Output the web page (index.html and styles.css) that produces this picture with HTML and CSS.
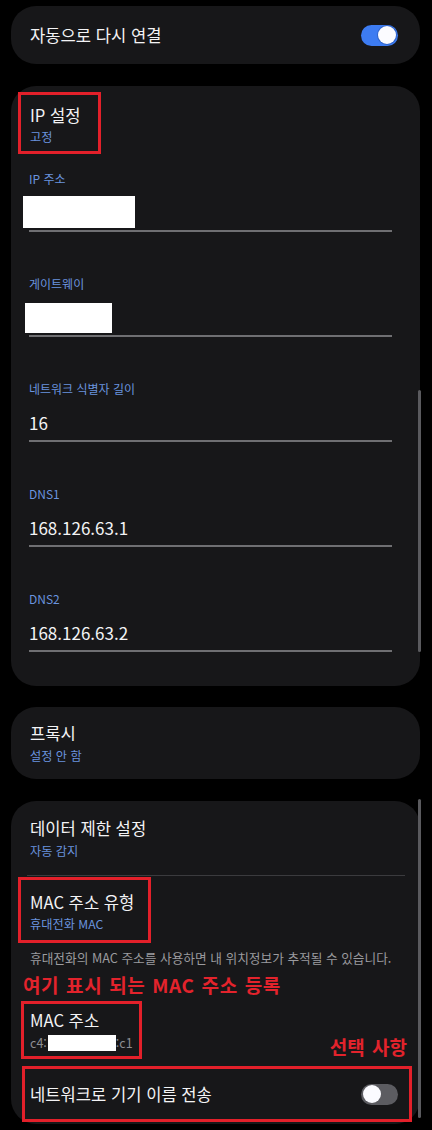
FILE: index.html
```html
<!DOCTYPE html>
<html lang="ko">
<head>
<meta charset="utf-8">
<title>Wi-Fi 설정</title>
<link rel="stylesheet" href="styles.css">
</head>
<body>
<div class="screen">
  <section class="card card-row">
    <span class="title">자동으로 다시 연결</span>
    <span class="toggle on"><span class="knob"></span></span>
  </section>

  <section class="card card-ip">
    <div class="mark mark-ip">
      <div class="title">IP 설정</div>
      <div class="sub">고정</div>
    </div>
    <div class="fields">
      <div class="field">
        <div class="label">IP 주소</div>
        <div class="value"><span class="redact redact-ip"></span></div>
        <div class="underline"></div>
      </div>
      <div class="field">
        <div class="label">게이트웨이</div>
        <div class="value"><span class="redact redact-gw"></span></div>
        <div class="underline"></div>
      </div>
      <div class="field">
        <div class="label">네트워크 식별자 길이</div>
        <div class="value">16</div>
        <div class="underline"></div>
      </div>
      <div class="field">
        <div class="label">DNS1</div>
        <div class="value">168.126.63.1</div>
        <div class="underline"></div>
      </div>
      <div class="field">
        <div class="label">DNS2</div>
        <div class="value">168.126.63.2</div>
        <div class="underline"></div>
      </div>
    </div>
    <div class="scrollbar sb-ip"></div>
  </section>

  <section class="card card-item">
    <div class="title">프록시</div>
    <div class="sub">설정 안 함</div>
  </section>

  <section class="card card-more">
    <div class="item-head">
      <div class="title">데이터 제한 설정</div>
      <div class="sub">자동 감지</div>
    </div>
    <div class="divider"></div>
    <div class="mark mark-type">
      <div class="title">MAC 주소 유형</div>
      <div class="sub">휴대전화 MAC</div>
    </div>
    <div class="desc">휴대전화의 MAC 주소를 사용하면 내 위치정보가 추적될 수 있습니다.</div>
    <div class="note note-main">여기 표시 되는 MAC 주소 등록</div>
    <div class="mac-row">
      <div class="mark mark-mac">
        <div class="title">MAC 주소</div>
        <div class="mac">c4:<span class="redact redact-mac"></span>:c1</div>
      </div>
      <div class="note note-opt">선택 사항</div>
    </div>
    <div class="mark mark-name">
      <span class="title">네트워크로 기기 이름 전송</span>
      <span class="toggle off"><span class="knob"></span></span>
    </div>
    <div class="scrollbar sb-more"></div>
  </section>
</div>
</body>
</html>
```

FILE: styles.css
```css
html, body {
  margin: 0;
  padding: 0;
  background: #000;
}

body {
  font-family: "Noto Sans CJK KR", "Noto Sans", sans-serif;
  color: #f1f1f3;
  width: 432px;
  height: 1130px;
  overflow: hidden;
}

.screen {
  padding: 6px 12px 0 11px;
}

.card {
  position: relative;
  background: #171719;
  border-radius: 25px;
}

.title {
  font-size: 16.6px;
  line-height: 24px;
  color: #f3f3f5;
  white-space: nowrap;
}

.sub {
  font-size: 12.2px;
  line-height: 18px;
  color: #6a93de;
  white-space: nowrap;
}

/* toggle */
.toggle {
  position: relative;
  display: inline-block;
  width: 37px;
  height: 21px;
  border-radius: 11px;
  flex: none;
}
.toggle.on { background: #3d7cf2; }
.toggle.off { background: #5c5c61; }
.toggle .knob {
  position: absolute;
  top: 1.5px;
  width: 18px;
  height: 18px;
  border-radius: 50%;
  background: #fbfbff;
}
.toggle.on .knob { right: 2px; box-shadow: 0 0 0 1px #2f63c8; }
.toggle.off .knob { left: 1.5px; }

/* card 1 */
.card-row {
  height: 58px;
  display: flex;
  align-items: center;
  justify-content: space-between;
  padding: 0 22px 0 19px;
  margin-bottom: 22px;
}

/* red annotation boxes */
.mark {
  box-sizing: border-box;
  border: 3px solid #e3202a;
}

.mark .sub { margin-top: 1px; }

/* card 2 */
.card-ip {
  padding: 6px 0 34px 0;
  margin-bottom: 21px;
}

.mark-ip {
  width: 83px;
  height: 62px;
  margin-left: 7px;
  padding: 8px 9px 5px;
}

.fields {
  margin: 16px 28px 0 18px;
}

.field + .field {
  margin-top: 43px;
}

.label {
  font-size: 12px;
  line-height: 18px;
  color: #6a93de;
  white-space: nowrap;
}

.value {
  display: flow-root;
  height: 26px;
  margin-top: 12px;
  font-size: 17px;
  line-height: 26px;
  color: #f3f3f5;
}

.underline {
  height: 2px;
  margin-top: 4px;
  background: #6f6f72;
}

.redact {
  display: block;
  background: #fff;
}

.redact-ip {
  width: 112px;
  height: 32px;
  margin: -4px 0 0 -6px;
}

.redact-gw {
  width: 87px;
  height: 30px;
  margin: -2px 0 0 -4px;
}

.scrollbar {
  position: absolute;
  right: -1px;
  width: 3px;
  border-radius: 2px;
  background: #5a5a5e;
}

.sb-ip { top: 304px; height: 262px; }
.sb-more { top: -2px; height: 319px; }

/* card 3 */
.card-item {
  padding: 14px 19px;
  margin-bottom: 22px;
}
.card-item .sub { margin-top: 2px; }

/* card 4 */
.card-more {
  padding: 15px 0 2px 0;
}

.item-head {
  padding-left: 19px;
}
.item-head .sub { margin-top: 2px; }

.divider {
  height: 1px;
  margin: 15px 15px 0 16px;
  background: #3b3b3e;
}

.mark-type {
  width: 133px;
  height: 66px;
  margin: 1px 0 0 7px;
  padding: 10px 9px 7px;
}

.desc {
  margin: 6px 0 0 19px;
  font-size: 12.7px;
  line-height: 18px;
  color: #9b9b9f;
  white-space: nowrap;
}

.note {
  font-family: "Noto Sans CJK KR", sans-serif;
  font-weight: 700;
  font-size: 19px;
  line-height: 22px;
  color: #e3232c;
  white-space: nowrap;
}

.note-main {
  margin: 7px 0 0 12px;
  letter-spacing: 0.6px;
  word-spacing: 1px;
}

.mac-row {
  display: flex;
  justify-content: space-between;
  align-items: flex-end;
  margin: 5px 13px 0 10px;
}

.mark-mac {
  width: 121px;
  height: 58px;
  padding: 4px 6px;
}

.mac {
  margin-top: 2px;
  font-size: 12.5px;
  line-height: 18px;
  color: #8d8d91;
  white-space: nowrap;
}

.redact-mac {
  display: inline-block;
  width: 68px;
  height: 16px;
  margin-left: 1px;
  vertical-align: -3px;
}

.note-opt {
  margin-bottom: 1px;
  word-spacing: 2px;
}

.mark-name {
  width: 390px;
  height: 56px;
  margin: 7px 0 0 11px;
  padding: 0 11px 0 5px;
  display: flex;
  align-items: center;
  justify-content: space-between;
}
```
